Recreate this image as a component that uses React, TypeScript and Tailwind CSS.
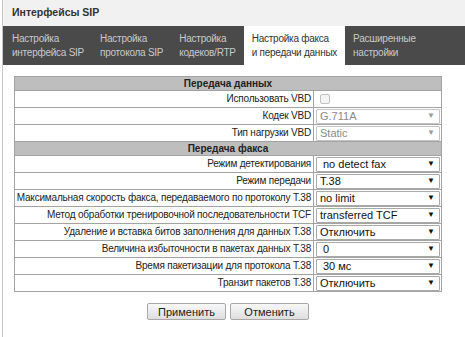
import React from 'react';

type Row =
  | { kind: 'head'; title: string }
  | { kind: 'check'; label: string }
  | { kind: 'select'; label: string; value: string; disabled?: boolean; pad?: boolean };

const rows: Row[] = [
  { kind: 'head', title: 'Передача данных' },
  { kind: 'check', label: 'Использовать VBD' },
  { kind: 'select', label: 'Кодек VBD', value: 'G.711A', disabled: true },
  { kind: 'select', label: 'Тип нагрузки VBD', value: 'Static', disabled: true },
  { kind: 'head', title: 'Передача факса' },
  { kind: 'select', label: 'Режим детектирования', value: 'no detect fax', pad: true },
  { kind: 'select', label: 'Режим передачи', value: 'T.38' },
  { kind: 'select', label: 'Максимальная скорость факса, передаваемого по протоколу T.38', value: 'no limit' },
  { kind: 'select', label: 'Метод обработки тренировочной последовательности TCF', value: 'transferred TCF' },
  { kind: 'select', label: 'Удаление и вставка битов заполнения для данных T.38', value: 'Отключить' },
  { kind: 'select', label: 'Величина избыточности в пакетах данных T.38', value: '0', pad: true },
  { kind: 'select', label: 'Время пакетизации для протокола T.38', value: '30 мс', pad: true },
  { kind: 'select', label: 'Транзит пакетов T.38', value: 'Отключить' },
];

const tabs = [
  ['Настройка', 'интерфейса SIP'],
  ['Настройка', 'протокола SIP'],
  ['Настройка', 'кодеков/RTP'],
  ['Настройка факса', 'и передачи данных'],
  ['Расширенные', 'настройки'],
];

const FakeSelect: React.FC<{ value: string; disabled?: boolean; pad?: boolean }> = ({ value, disabled, pad }) => (
  <div
    className={`flex items-center justify-between h-[15px] border rounded-[1px] bg-white ${
      disabled ? 'border-[#c4c4c4] text-[#8a8a8a]' : 'border-[#a9a9a9] text-[#111]'
    }`}
  >
    <span className={`${pad ? 'pl-[6px]' : 'pl-[3px]'} text-[11px] leading-[13px] whitespace-nowrap`}>{value}</span>
    <span className={`pr-[4px] text-[8px] leading-none ${disabled ? 'text-[#9a9a9a]' : 'text-[#111]'}`}>▼</span>
  </div>
);

export default function App() {
  return (
    <div className="min-h-[337px] ml-[2px] border-l border-[#c6c6c6] bg-white font-['Liberation_Sans',Arial,sans-serif] text-[10px] text-[#222]">
      {/* Panel title */}
      <div className="h-[26px] bg-[#f1f1f1] pl-[9px] flex items-center font-bold text-[#333] text-[10.5px]">
        Интерфейсы SIP
      </div>

      {/* Tabs */}
      <div className="flex h-[39px] bg-[#4a4a4a] pl-[1px]">
        {tabs.map((t, i) => {
          const active = i === 3;
          return (
            <div
              key={i}
              className={`px-2 pt-[6px] leading-[14px] whitespace-nowrap tracking-[-0.25px] ${active ? 'bg-white text-[#333]' : 'text-[#c9c9c9]'}`}
            >
              <div>{t[0]}</div>
              <div>{t[1]}</div>
            </div>
          );
        })}
      </div>

      {/* Settings table */}
      <div className="pl-[11px] pt-[11px]">
        <table className="w-[428px] table-fixed border-collapse border border-[#a3a3a3]">
          <colgroup>
            <col className="w-[299px]" />
            <col />
          </colgroup>
          <tbody>
            {rows.map((r, i) => {
              if (r.kind === 'head') {
                return (
                  <tr key={i}>
                    <td colSpan={2} className="h-[14px] bg-[#bebebe] border border-[#a3a3a3] text-center font-bold leading-[12px] p-0">
                      {r.title}
                    </td>
                  </tr>
                );
              }
              return (
                <tr key={i}>
                  <td className="h-[17px] border border-[#a3a3a3] text-right pr-[2px] py-0 pl-0 leading-[14px] whitespace-nowrap tracking-[-0.2px]">
                    {r.label}
                  </td>
                  <td className="h-[17px] border border-[#a3a3a3] pl-[2px] pr-[1px] py-0">
                    {r.kind === 'check' ? (
                      <div className="ml-[4px] w-[10px] h-[10px] border border-[#c2c2c2] rounded-[2px] bg-[#f4f4f4]" />
                    ) : (
                      <FakeSelect value={r.value} disabled={r.disabled} pad={r.pad} />
                    )}
                  </td>
                </tr>
              );
            })}
          </tbody>
        </table>

        {/* Actions */}
        <div className="w-[428px] flex justify-center gap-[4px] mt-[11px]">
          <button className="w-[79px] h-[17px] border border-[#a8a8a8] rounded-[2px] bg-gradient-to-b from-[#f8f8f8] to-[#dedede] text-[11px] leading-[14px] text-[#222]">
            Применить
          </button>
          <button className="w-[79px] h-[17px] border border-[#a8a8a8] rounded-[2px] bg-gradient-to-b from-[#f8f8f8] to-[#dedede] text-[11px] leading-[14px] text-[#222]">
            Отменить
          </button>
        </div>
      </div>
    </div>
  );
}
